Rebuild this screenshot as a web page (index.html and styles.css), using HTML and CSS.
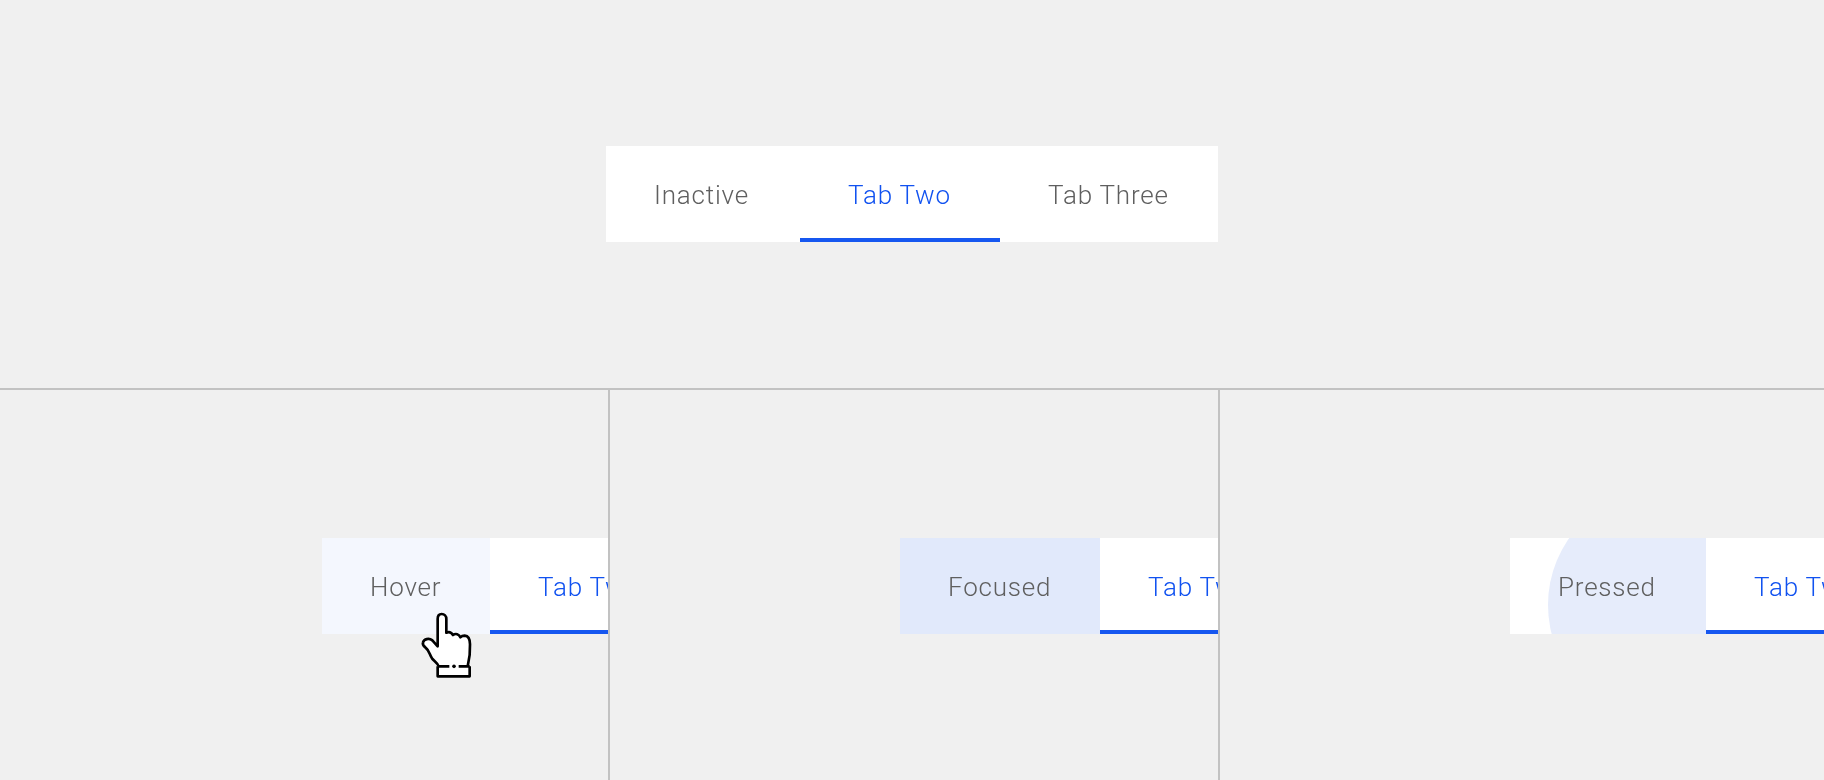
FILE: index.html
```html
<!DOCTYPE html>
<html lang="en">
<head>
<meta charset="utf-8">
<title>Tabs states</title>
<link rel="stylesheet" href="styles.css">
</head>
<body>
<main class="board">
  <section class="cell cell-top">
    <div class="tabs">
      <button class="tab tab-first">Inactive</button>
      <button class="tab tab-active">Tab Two</button>
      <button class="tab tab-last">Tab Three</button>
    </div>
  </section>
  <section class="cell cell-hover">
    <div class="tabs">
      <button class="tab tab-hover">Hover</button>
      <button class="tab tab-active">Tab Two</button>
      <button class="tab tab-last">Tab Three</button>
    </div>
    <svg class="cursor" viewBox="360 275 165 200" aria-hidden="true">
      <path class="hand" d="M503 438C508 418 511 396 510 372C510 355 505 347 494 346C489 346 485 347 481 351C477 341 467 338 459 344C454 336 446 334 439 337V296C439 287 433 281 425 281C417 281 413 288 413 296V378L397 360C387 352 372 356 369 366C367 372 371 377 376 381C388 390 389 404 396 414C402 422 412 426 416 438"/>
      <path class="hand" d="M413 438V468H509V438"/>
      <path class="hand-ink" d="M413 438H448M476 438H509"/>
      <circle class="hand-dot" cx="462" cy="438" r="5.5"/>
    </svg>
  </section>
  <section class="cell cell-focus">
    <div class="tabs">
      <button class="tab tab-focus">Focused</button>
      <button class="tab tab-active">Tab Two</button>
      <button class="tab tab-last">Tab Three</button>
    </div>
  </section>
  <section class="cell cell-press">
    <div class="tabs">
      <button class="tab tab-press">Pressed</button>
      <button class="tab tab-active">Tab Two</button>
      <button class="tab tab-last">Tab Three</button>
    </div>
  </section>
</main>
</body>
</html>
```
FILE: styles.css
```css
* { box-sizing: border-box; }
html, body { margin: 0; height: 100%; }
body { background: #f0f0f0; overflow: hidden; }
.board {
  display: grid;
  grid-template-columns: 610px 610px 1fr;
  grid-template-rows: 390px 390px;
  width: 1824px;
  height: 780px;
}
.cell {
  position: relative;
  display: flex;
  overflow: hidden;
  padding-top: 148px;
  border-right: 2px solid #c2c2c2;
}
.cell-top {
  grid-column: 1 / -1;
  justify-content: center;
  padding-top: 146px;
  border-right: 0;
  border-bottom: 2px solid #c2c2c2;
}
.cell-hover { padding-left: 322px; }
.cell-focus { padding-left: 290px; }
.cell-press { padding-left: 290px; border-right: 0; }
.tabs {
  display: flex;
  flex: none;
  height: 96px;
  background: #fff;
}
.tab {
  position: relative;
  overflow: hidden;
  flex: none;
  width: 200px;
  height: 96px;
  padding: 2px 0 0 48px;
  border: 0;
  background: none;
  color: #5f5f5f;
  font-family: Roboto, "Liberation Sans", sans-serif;
  font-size: 26px;
  font-weight: 350;
  letter-spacing: 0.8px;
  text-align: left;
  white-space: nowrap;
  will-change: transform;
}
.tab-first { width: 194px; }
.tab-last { width: 218px; }
.tab-active { color: #1152f0; box-shadow: inset 0 -4px 0 #1657f0; }
.tab-hover { width: 168px; background: #f4f7fe; }
.tab-focus { background: #e1e9fb; }
.tab-press { width: 196px; isolation: isolate; }
.tab-press::before {
  content: "";
  position: absolute;
  z-index: -1;
  left: 38px;
  top: -49px;
  width: 232px;
  height: 232px;
  border-radius: 50%;
  background: #e6ecfb;
}
.cursor {
  position: absolute;
  left: 420px;
  top: 221.7px;
  width: 55px;
  height: 66.7px;
}
.hand { fill: #fff; stroke: #000; stroke-width: 8; stroke-linejoin: round; }
.hand-ink { fill: none; stroke: #000; stroke-width: 8; }
.hand-dot { fill: #000; }
```
